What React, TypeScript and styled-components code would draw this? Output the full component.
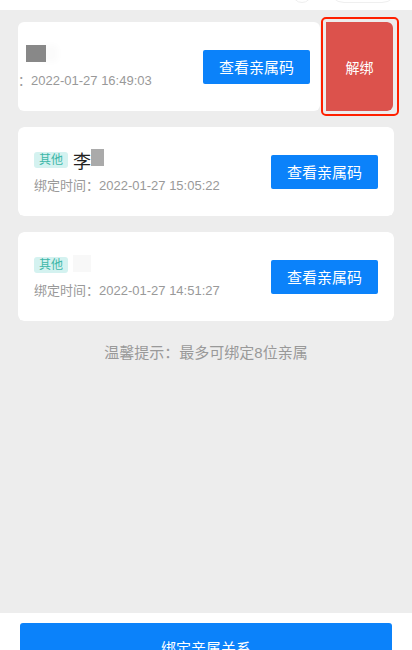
import React from 'react';
import styled, { createGlobalStyle } from 'styled-components';

interface IRelative {
  id: number;
  name: string;
  mask: 'dark' | 'mid' | 'light';
  date: string;
  swiped?: boolean;
}

const relatives: IRelative[] = [
  { id: 1, name: '', mask: 'dark', date: '2022-01-27 16:49:03', swiped: true },
  { id: 2, name: '李', mask: 'mid', date: '2022-01-27 15:05:22' },
  { id: 3, name: '', mask: 'light', date: '2022-01-27 14:51:27' },
];

const GlobalStyle = createGlobalStyle`
  html, body {
    margin: 0;
    padding: 0;
    overflow: hidden;
    background: #ededed;
    font-family: "Liberation Sans", "Noto Sans CJK SC", sans-serif;
  }
`;

export default function App() {
  return (
    <>
      <GlobalStyle />
      <Page>
        <TopStrip>
          <Capsule $w={20} />
          <Capsule $w={70} />
        </TopStrip>
        <Main>
          {relatives.map((item) => (
            <SwipeCell key={item.id}>
              <Track $swiped={!!item.swiped}>
                <Card $swiped={!!item.swiped}>
                  <Info>
                    <TitleRow>
                      <Tag>其他</Tag>
                      <Name>
                        {item.name}
                        <Mask $tone={item.mask} />
                      </Name>
                    </TitleRow>
                    <Time>绑定时间：{item.date}</Time>
                  </Info>
                  <ViewButton>查看亲属码</ViewButton>
                </Card>
                {item.swiped && <UnbindButton>解绑</UnbindButton>}
              </Track>
              {item.swiped && <Highlight />}
            </SwipeCell>
          ))}
          <Hint>温馨提示：最多可绑定8位亲属</Hint>
        </Main>
        <BottomBar>
          <BindButton>绑定亲属关系</BindButton>
        </BottomBar>
      </Page>
    </>
  );
}

const Page = styled.div`
  height: 677px;
  display: flex;
  flex-direction: column;
  overflow: hidden;
`;

const TopStrip = styled.div`
  height: 10px;
  flex-shrink: 0;
  background: #fff;
  overflow: hidden;
  display: flex;
  justify-content: flex-end;
  align-items: flex-end;
  gap: 16px;
  padding-right: 14px;
  box-sizing: border-box;
`;

const Capsule = styled.div<{ $w: number }>`
  width: ${(p) => p.$w}px;
  height: 32px;
  margin-bottom: 7px;
  flex-shrink: 0;
  box-sizing: border-box;
  border: 1px solid #efefef;
  border-radius: 16px;
`;

const Main = styled.div`
  flex: 1;
  padding: 12px 18px 0;
  display: flex;
  flex-direction: column;
  gap: 16px;
`;

const SwipeCell = styled.div`
  position: relative;
  height: 89px;
`;

const Track = styled.div<{ $swiped: boolean }>`
  height: 100%;
  border-radius: 6px;
  overflow: hidden;
  display: flex;
  & > * {
    transform: translateX(${(p) => (p.$swiped ? '-68px' : '0')});
  }
`;

const Card = styled.div<{ $swiped: boolean }>`
  flex: 0 0 ${(p) => (p.$swiped ? 'calc(100% - 6px)' : '100%')};
  box-sizing: border-box;
  height: 100%;
  padding: 0 ${(p) => (p.$swiped ? '10px' : '16px')} 0 16px;
  background: #fff;
  border-radius: 6px;
  display: flex;
  align-items: center;
  justify-content: space-between;
`;

const Info = styled.div`
  display: flex;
  flex-direction: column;
  gap: 5px;
`;

const TitleRow = styled.div`
  height: 24px;
  display: flex;
  align-items: center;
  gap: 5px;
`;

const Tag = styled.span`
  height: 16px;
  line-height: 16px;
  padding: 0 5px;
  font-size: 12px;
  color: #3db7a8;
  background: #d4f2f0;
  border-radius: 3px;
`;

const Name = styled.span`
  display: flex;
  align-items: center;
  font-size: 18px;
  color: #222;
`;

const Mask = styled.span<{ $tone: 'dark' | 'mid' | 'light' }>`
  display: inline-block;
  width: ${(p) => (p.$tone === 'dark' ? '20px' : p.$tone === 'mid' ? '13px' : '18px')};
  height: 17px;
  margin-left: ${(p) => (p.$tone === 'dark' ? '21px' : '0')};
  margin-top: ${(p) => (p.$tone === 'mid' ? '-6px' : '-4px')};
  background: ${(p) =>
    p.$tone === 'dark' ? '#888' : p.$tone === 'mid' ? '#aaa' : '#f8f8f8'};
  box-shadow: ${(p) => (p.$tone === 'dark' ? '12px 0 6px #fbfbfb' : 'none')};
`;

const Time = styled.div`
  font-size: 13px;
  line-height: 18px;
  color: #999;
  white-space: nowrap;
`;

const ViewButton = styled.button`
  width: 107px;
  height: 34px;
  border: none;
  border-radius: 2px;
  background: #0b82fa;
  color: #fff;
  font-family: inherit;
  font-size: 15px;
  padding: 0;
`;

const UnbindButton = styled.button`
  flex: 0 0 67px;
  margin-left: 6px;
  height: 100%;
  border: none;
  border-radius: 0 6px 6px 0;
  background: #dc524c;
  color: #fff;
  font-family: inherit;
  font-size: 14px;
  padding: 0;
`;

const Highlight = styled.div`
  position: absolute;
  left: 303px;
  top: -5px;
  width: 78px;
  height: 99px;
  box-sizing: border-box;
  border: 2px solid #ff2000;
  border-radius: 5px;
  pointer-events: none;
`;

const Hint = styled.div`
  margin-top: 6px;
  text-align: center;
  font-size: 15px;
  line-height: 20px;
  color: #999;
`;

const BottomBar = styled.div`
  flex-shrink: 0;
  height: 64px;
  background: #fff;
  padding: 10px 20px;
  box-sizing: border-box;
`;

const BindButton = styled.button`
  width: 100%;
  height: 48px;
  border: none;
  border-radius: 3px;
  background: #0b82fa;
  color: #fff;
  font-family: inherit;
  font-size: 15px;
  padding: 0;
`;
